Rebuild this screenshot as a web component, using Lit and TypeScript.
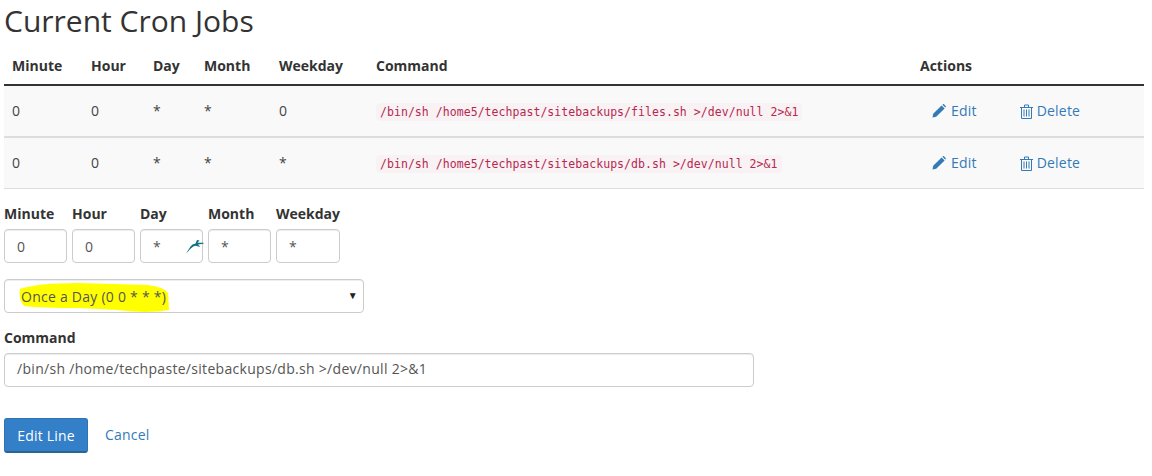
import { LitElement, html, css } from "lit";
import { customElement } from "lit/decorators.js";

const pencil = html`<svg class="ico" width="14" height="14" viewBox="0 0 14 14"><path fill="#337ab7" d="M0.5 13.500 L1.200 9.800 L9.600 1.400 L12.600 4.400 L4.200 12.800 Z M10.400 0.700 L11 0.200 Q11.500 -0.100 12 0.300 L13.600 1.900 Q14 2.400 13.700 2.900 L13.200 3.600 Z"/></svg>`;
const trash = html`<svg class="ico" width="13" height="15" viewBox="0 0 13 15"><path fill="none" stroke="#337ab7" d="M0 3.500 H13 M4.500 3.500 V1 H8.500 V3.500 M1.500 3.500 V14.500 H11.500 V3.500 M4 5.500 V12.500 M6.500 5.500 V12.500 M9 5.500 V12.500"/></svg>`;

@customElement("app-root")
export class AppRoot extends LitElement {
  static styles = css`
    :host { display: block; width: 1152px; height: 476px; overflow: hidden; background: #fff; color: #333; font-family: "Open Sans", sans-serif; font-size: 14px; line-height: 20px; }
    .page { padding: 0 8px 0 4px; }
    h1 { margin: 0; padding-top: 3px; height: 48px; box-sizing: border-box; font-size: 30px; line-height: 36px; font-weight: 400; color: #333; }
    table { width: 1140px; border-collapse: collapse; table-layout: fixed; }
    th { text-align: left; font-weight: 700; padding: 0 8px; height: 36px; border-bottom: 2px solid #333; box-sizing: content-box; }
    td { padding: 1px 8px 0; height: 49px; background: #f9f9f9; border-bottom: 2px solid #ddd; color: #444; }
    td.v { padding-top: 0; height: 50px; }
    tr:last-child td { border-bottom: 1px solid #ddd; }
    code { font-family: "DejaVu Sans Mono", monospace; font-size: 11.5px; letter-spacing: 0.05px; color: #b5284f; background: #f9f2f4; padding: 2px 4px; border-radius: 4px; white-space: pre; }
    td.acts { padding: 0 8px 0 20px; height: 50px; }
    a { color: #337ab7; text-decoration: none; letter-spacing: 0.2px; }
    .acts a { display: inline-flex; align-items: center; gap: 5px; height: 20px; vertical-align: top; }
    .acts a + a { margin-left: 43px; }
    .acts a + a .ico { margin-right: -1px; }
    .ico { display: block; }
    .labels, .inputs { display: flex; gap: 5px; }
    .labels { margin-top: 15px; height: 20px; }
    .inputs { margin-top: 5px; position: relative; }
    .f { width: 63px; }
    .f.w { width: 64px; }
    label { display: block; font-weight: 700; white-space: nowrap; }
    .box { box-sizing: border-box; height: 34px; border: 1px solid #ccc; border-radius: 4px; padding: 7px 12px 5px; line-height: 20px; color: #555; background: #fff; box-shadow: inset 0 1px 1px rgba(0,0,0,.075); }
    .bird { position: absolute; left: 181px; top: 10px; }
    .sel { width: 360px; margin-top: 16px; position: relative; color: #555; padding-left: 16px; letter-spacing: 0.25px; }
    .sel span { position: relative; }
    .mark { position: absolute; left: 13px; top: 1px; }
    .caret { position: absolute; right: 5px; top: 8px; font-size: 10px; line-height: 14px; color: #222; }
    .cmdl { margin-top: 15px; height: 20px; }
    .cmd { width: 750px; margin-top: 5px; padding: 5px 12px 7px; letter-spacing: 0.3px; }
    .btns { display: flex; align-items: center; margin-top: 31px; }
    .btn { box-sizing: border-box; width: 84px; height: 35px; text-align: center; line-height: 33px; background: #337fc8; color: #fff; border: 1px solid #2e74b5; border-bottom: 2px solid #2a6395; border-radius: 3px; letter-spacing: 0.2px; }
    .cancel { margin-left: 17px; padding-bottom: 2px; }
  `;

  private row(cells: string[], cmd: string) {
    return html`<tr>
      ${cells.map((c) => html`<td class="v">${c}</td>`)}
      <td><code>${cmd}</code></td>
      <td class="acts"><a href="#">${pencil}Edit</a><a href="#">${trash}Delete</a></td>
    </tr>`;
  }

  render() {
    const cols = [79, 62, 51, 75, 97, 544, 232];
    const heads = ["Minute", "Hour", "Day", "Month", "Weekday", "Command", "Actions"];
    const fields = [["Minute", "0"], ["Hour", "0"], ["Day", "*"], ["Month", "*"], ["Weekday", "*"]];
    return html`<div class="page">
      <h1>Current Cron Jobs</h1>
      <table>
        <colgroup>${cols.map((w) => html`<col style="width:${w}px" />`)}</colgroup>
        <thead><tr>${heads.map((h) => html`<th>${h}</th>`)}</tr></thead>
        <tbody>
          ${this.row(["0", "0", "*", "*", "0"], "/bin/sh /home5/techpast/sitebackups/files.sh >/dev/null 2>&1")}
          ${this.row(["0", "0", "*", "*", "*"], "/bin/sh /home5/techpast/sitebackups/db.sh >/dev/null 2>&1")}
        </tbody>
      </table>
      <div class="labels">${fields.map(([l], i) => html`<div class="f ${i === 4 ? "w" : ""}"><label>${l}</label></div>`)}</div>
      <div class="inputs">
        ${fields.map(([, v], i) => html`<div class="box f ${i === 4 ? "w" : ""}">${v}</div>`)}
        <svg class="bird" width="20" height="16" viewBox="0 0 20 16"><path fill="#0f7280" d="M1 14.500 L5.500 7.500 Q7 5 10.500 4.500 L12 1 L14.500 1.500 L12.500 3.800 L18.500 3.800 L18.500 4.800 L13 5.500 L15.500 8 L10.500 6.800 Q7 7.500 3.500 12 Z"/></svg>
      </div>
      <div class="box sel">
        <svg class="mark" width="152" height="32" viewBox="0 0 152 32"><path fill="#ffff00" d="M2 8 Q20 2 60 2 L130 4 Q146 6 150 12 L151 29 Q130 33 100 29 L60 27 Q25 27 6 25 Q0 18 2 8 Z"/></svg>
        <span>Once a Day (0 0 * * *)</span>
        <div class="caret">▼</div>
      </div>
      <label class="cmdl">Command</label>
      <div class="box cmd">/bin/sh /home/techpaste/sitebackups/db.sh &gt;/dev/null 2&gt;&amp;1</div>
      <div class="btns"><div class="btn">Edit Line</div><a class="cancel" href="#">Cancel</a></div>
    </div>`;
  }
}
